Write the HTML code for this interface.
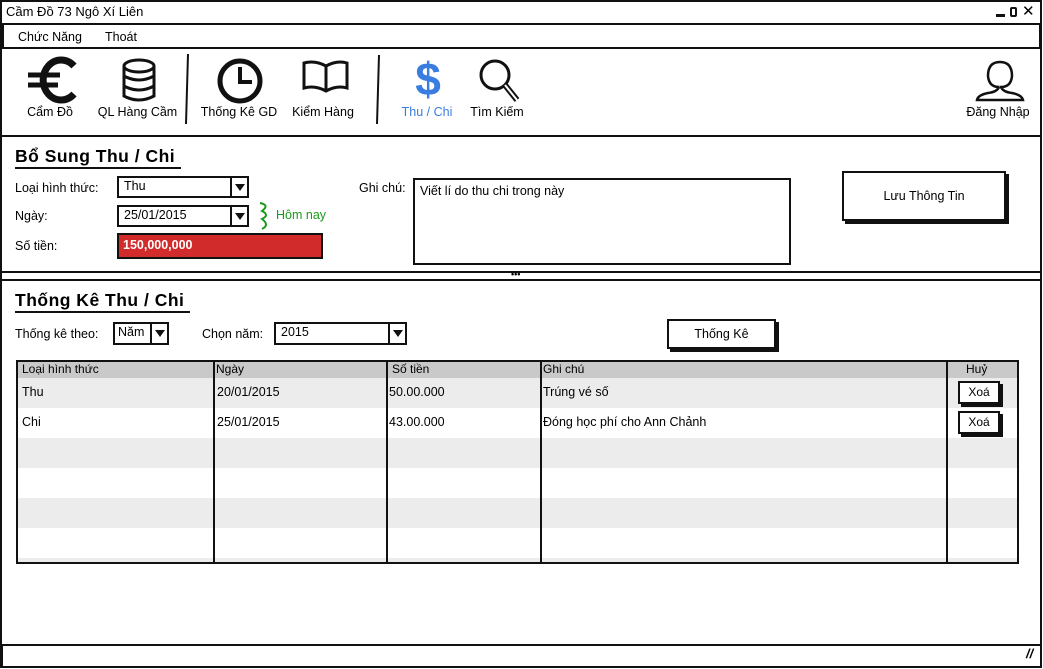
<!DOCTYPE html>
<html><head><meta charset="utf-8"><style>
*{margin:0;padding:0;box-sizing:border-box}
body{width:1043px;height:669px;background:#fff;position:relative;overflow:hidden;font-family:"Liberation Sans","DejaVu Sans",sans-serif;font-size:12.5px;color:#000}
.a{position:absolute}
.bx{position:absolute;border:2px solid #111;background:#fff}
.t{position:absolute;white-space:nowrap}
.lbl{position:absolute;font-size:12.5px;text-align:center;white-space:nowrap}
.combo{position:absolute;border:2px solid #111;background:#fff}
.combo span{position:absolute;left:5px;top:1px}
.combo i{position:absolute;right:0;top:0;bottom:0;width:17px;border-left:2px solid #111}
.combo i:after{content:"";position:absolute;left:3px;top:6px;border-left:5px solid transparent;border-right:5px solid transparent;border-top:7px solid #111}
.btn{position:absolute;border:2px solid #111;background:#fff;box-shadow:3px 3px 0 #111;text-align:center}
h2{position:absolute;font-size:17.5px;font-weight:bold;letter-spacing:.5px;border-bottom:2px solid #111;padding-right:6px}
</style></head><body>
<!-- window frame -->
<div class="a" style="left:0;top:0;width:1042px;height:668px;border:2px solid #111"></div>
<div class="t" style="left:6px;top:4px;font-size:13px">Cầm Đồ 73 Ngô Xí Liên</div>
<div class="a" style="left:996px;top:14px;width:9px;height:3px;background:#111"></div>
<div class="a" style="left:1010px;top:7px;width:7px;height:10px;border:2px solid #111;border-radius:2px"></div>
<div class="t" style="left:1022px;top:2px;font-size:15px;font-weight:bold">✕</div>
<!-- menu -->
<div class="a" style="left:2px;top:23px;width:1039px;height:26px;border:2px solid #111"></div>
<div class="t" style="left:18px;top:30px">Chức Năng</div>
<div class="t" style="left:105px;top:30px">Thoát</div>
<!-- toolbar bottom line -->
<div class="a" style="left:2px;top:135px;width:1039px;height:2px;background:#111"></div>
<!-- toolbar icons -->
<svg class="a" style="left:0;top:50px" width="1043" height="85">
 <path d="M74 16 A18 20 0 1 0 74 44" fill="none" stroke="#111" stroke-width="7"/>
 <path d="M28 25 H60 M28 35 H58" stroke="#111" stroke-width="5"/>
 <g fill="none" stroke="#111" stroke-width="3">
  <ellipse cx="139" cy="16" rx="15" ry="6"/>
  <path d="M124 16 V46 Q139 54 154 46 V16 M124 26 Q139 34 154 26 M124 36 Q139 44 154 36"/>
  <circle cx="240" cy="31" r="20" stroke-width="5"/>
  <path d="M240 17 V32 H252" stroke-width="4"/>
  <path d="M326 16 Q315 10 304 13 V38 Q315 35 326 41 Q337 35 347 38 V13 Q337 10 326 16 V41"/>
  <circle cx="495" cy="25" r="14"/>
  <path d="M505 35 L517 50" stroke-width="6"/>
  <path d="M505 35 L517 50" stroke="#fff" stroke-width="2"/>
  <path d="M999 37 Q989 37 988 26 Q988 12 1000 12 Q1012 12 1012 26 Q1011 37 1001 37 Q1003 42 1012 43 Q1022 45 1023 50 H977 Q978 45 988 43 Q997 42 999 37" stroke-width="2.5"/>
 </g>
 <path d="M188 4 L186 74 M379 5 L377 74" stroke="#111" stroke-width="2"/>
 <text x="428" y="45" font-family="Liberation Sans" font-weight="bold" font-size="46" fill="#3a7de0" text-anchor="middle">$</text>
</svg>
<div class="lbl" style="left:22px;top:105px;width:56px">Cẩm Đồ</div>
<div class="lbl" style="left:90px;top:105px;width:95px">QL Hàng Cầm</div>
<div class="lbl" style="left:194px;top:105px;width:90px">Thống Kê GD</div>
<div class="lbl" style="left:288px;top:105px;width:70px">Kiểm Hàng</div>
<div class="lbl" style="left:394px;top:105px;width:66px;color:#3a7de0">Thu / Chi</div>
<div class="lbl" style="left:464px;top:105px;width:66px">Tìm Kiếm</div>
<div class="lbl" style="left:960px;top:105px;width:76px">Đăng Nhập</div>
<!-- section 1 -->
<h2 style="left:15px;top:146px">Bổ Sung Thu / Chi</h2>
<div class="t" style="left:15px;top:181px">Loại hình thức:</div>
<div class="t" style="left:15px;top:209px">Ngày:</div>
<div class="t" style="left:15px;top:239px">Số tiền:</div>
<div class="combo" style="left:117px;top:176px;width:132px;height:22px"><span>Thu</span><i></i></div>
<div class="combo" style="left:117px;top:205px;width:132px;height:22px"><span>25/01/2015</span><i></i></div>
<div class="a" style="left:117px;top:233px;width:206px;height:26px;background:#d12b2b;border:2px solid #111"></div>
<div class="t" style="left:123px;top:238px;color:#fff;font-weight:bold">150,000,000</div>
<svg class="a" style="left:256px;top:201px" width="18" height="30"><path d="M4 2 Q14 4 6 10 Q14 14 6 18 Q14 24 6 28" fill="none" stroke="#1a9a1a" stroke-width="2"/></svg>
<div class="t" style="left:276px;top:208px;color:#1a9a1a">Hôm nay</div>
<div class="t" style="left:359px;top:181px">Ghi chú:</div>
<div class="bx" style="left:413px;top:178px;width:378px;height:87px"></div>
<div class="t" style="left:420px;top:184px">Viết lí do thu chi trong này</div>
<div class="btn" style="left:842px;top:171px;width:164px;height:50px;line-height:46px">Lưu Thông Tin</div>
<!-- splitter -->
<div class="a" style="left:2px;top:271px;width:1039px;height:2px;background:#111"></div>
<div class="a" style="left:2px;top:279px;width:1039px;height:2px;background:#111"></div>
<div class="t" style="left:511px;top:269px;font-size:9px;font-weight:bold">•••</div>
<!-- section 2 -->
<h2 style="left:15px;top:290px">Thống Kê Thu / Chi</h2>
<div class="t" style="left:15px;top:327px">Thống kê theo:</div>
<div class="combo" style="left:113px;top:322px;width:56px;height:23px"><span style="left:3px">Năm</span><i></i></div>
<div class="t" style="left:202px;top:327px">Chọn năm:</div>
<div class="combo" style="left:274px;top:322px;width:133px;height:23px"><span>2015</span><i></i></div>
<div class="btn" style="left:667px;top:319px;width:109px;height:30px;line-height:26px">Thống Kê</div>
<!-- table -->
<div class="a" style="left:16px;top:360px;width:1003px;height:204px;border:2px solid #111;overflow:hidden">
 <div class="a" style="left:0;top:0;width:100%;height:16px;background:#c9c9c9"></div>
 <div class="a" style="left:0;top:16px;width:100%;height:30px;background:#ececec"></div>
 <div class="a" style="left:0;top:76px;width:100%;height:30px;background:#ececec"></div>
 <div class="a" style="left:0;top:136px;width:100%;height:30px;background:#ececec"></div>
 <div class="a" style="left:0;top:196px;width:100%;height:10px;background:#ececec"></div>
 <div class="a" style="left:195px;top:0;width:2px;height:100%;background:#111"></div>
 <div class="a" style="left:368px;top:0;width:2px;height:100%;background:#111"></div>
 <div class="a" style="left:522px;top:0;width:2px;height:100%;background:#111"></div>
 <div class="a" style="left:928px;top:0;width:2px;height:100%;background:#111"></div>
</div>
<div class="t" style="left:22px;top:362px;font-size:12px">Loại hình thức</div>
<div class="t" style="left:216px;top:362px;font-size:12px">Ngày</div>
<div class="t" style="left:392px;top:362px;font-size:12px">Số tiền</div>
<div class="t" style="left:543px;top:362px;font-size:12px">Ghi chú</div>
<div class="t" style="left:966px;top:362px;font-size:12px">Huỷ</div>
<div class="t" style="left:22px;top:385px">Thu</div>
<div class="t" style="left:217px;top:385px">20/01/2015</div>
<div class="t" style="left:389px;top:385px">50.00.000</div>
<div class="t" style="left:543px;top:385px">Trúng vé số</div>
<div class="t" style="left:22px;top:415px">Chi</div>
<div class="t" style="left:217px;top:415px">25/01/2015</div>
<div class="t" style="left:389px;top:415px">43.00.000</div>
<div class="t" style="left:543px;top:415px">Đóng học phí cho Ann Chảnh</div>
<div class="btn" style="left:958px;top:381px;width:42px;height:23px;line-height:19px;font-size:12px">Xoá</div>
<div class="btn" style="left:958px;top:411px;width:42px;height:23px;line-height:19px;font-size:12px">Xoá</div>
<!-- status -->
<div class="a" style="left:1px;top:644px;width:1041px;height:24px;border:2px solid #111"></div>
<div class="t" style="left:1026px;top:646px;font-size:13px;font-weight:bold;font-style:italic">//</div>
</body></html>
